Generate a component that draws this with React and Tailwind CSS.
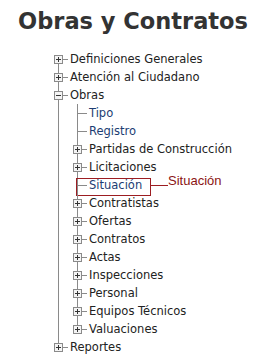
import React from "react";

const LINE = "#8a8a8a";

const Connector = ({ kind, box }) => {
  // kind: "first" | "tee" | "last" | "pipe"
  let y1 = 0;
  let y2 = 18;
  if (kind === "first") y1 = 9.5;
  if (kind === "last") y2 = 9.5;
  return (
    <svg width="19" height="18" className="shrink-0 block">
      <line x1="9.5" y1={y1} x2="9.5" y2={y2} stroke={LINE} strokeWidth="1" />
      {kind !== "pipe" && (
        <line x1="9.5" y1="9.5" x2="19" y2="9.5" stroke={LINE} strokeWidth="1" />
      )}
      {box && (
        <g>
          <rect x="5.5" y="5.5" width="8" height="8" fill="#f4f4f4" stroke={LINE} strokeWidth="1" />
          <line x1="7" y1="9.5" x2="12" y2="9.5" stroke="#333" strokeWidth="1" />
          {box === "plus" && (
            <line x1="9.5" y1="7" x2="9.5" y2="12" stroke="#333" strokeWidth="1" />
          )}
        </g>
      )}
    </svg>
  );
};

const Row = ({ gutters = [], kind, box, label, blue, children }) => (
  <div className="relative flex items-center h-[18px]">
    {gutters.map((g, i) => (
      <Connector key={i} kind={g} />
    ))}
    <Connector kind={kind} box={box} />
    <span
      className={`ml-[2px] whitespace-nowrap text-[11.5px] leading-[18px] ${
        blue ? "text-[#1c3d73]" : "text-[#222222]"
      }`}
    >
      {label}
    </span>
    {children}
  </div>
);

const obras = [
  { label: "Tipo", blue: true },
  { label: "Registro", blue: true },
  { label: "Partidas de Construcción", box: "plus" },
  { label: "Licitaciones", box: "plus" },
  { label: "Situación", blue: true, note: true },
  { label: "Contratistas", box: "plus" },
  { label: "Ofertas", box: "plus" },
  { label: "Contratos", box: "plus" },
  { label: "Actas", box: "plus" },
  { label: "Inspecciones", box: "plus" },
  { label: "Personal", box: "plus" },
  { label: "Equipos Técnicos", box: "plus" },
  { label: "Valuaciones", box: "plus" },
];

export default function App() {
  return (
    <div
      className="w-[266px] h-[363px] bg-white overflow-hidden"
      style={{ fontFamily: '"DejaVu Sans", sans-serif' }}
    >
      <h1 className="pt-[8px] text-center text-[22.5px] leading-[27px] font-bold text-[#333333]">
        Obras y Contratos
      </h1>

      <div className="mt-[15px] pl-[49px]">
        <Row kind="first" box="plus" label="Definiciones Generales" />
        <Row kind="tee" box="plus" label="Atención al Ciudadano" />
        <Row kind="tee" box="minus" label="Obras" />
        {obras.map((item, i) => (
          <Row
            key={item.label}
            gutters={["pipe"]}
            kind={i === obras.length - 1 ? "last" : "tee"}
            box={item.box}
            label={item.label}
            blue={item.blue}
          >
            {item.note && (
              <div className="absolute left-[27px] top-[2px] flex items-start">
                <div className="w-[75px] h-[18px] border border-[#9c1d22]" />
                <div className="mt-[7px] w-[17px] h-px bg-[#9c1d22]" />
                <span
                  className="-mt-[5px] text-[13px] leading-[15px] text-[#8b1414]"
                  style={{ fontFamily: '"Liberation Sans", Arial, sans-serif' }}
                >
                  Situación
                </span>
              </div>
            )}
          </Row>
        ))}
        <Row kind="last" box="plus" label="Reportes" />
      </div>
    </div>
  );
}
